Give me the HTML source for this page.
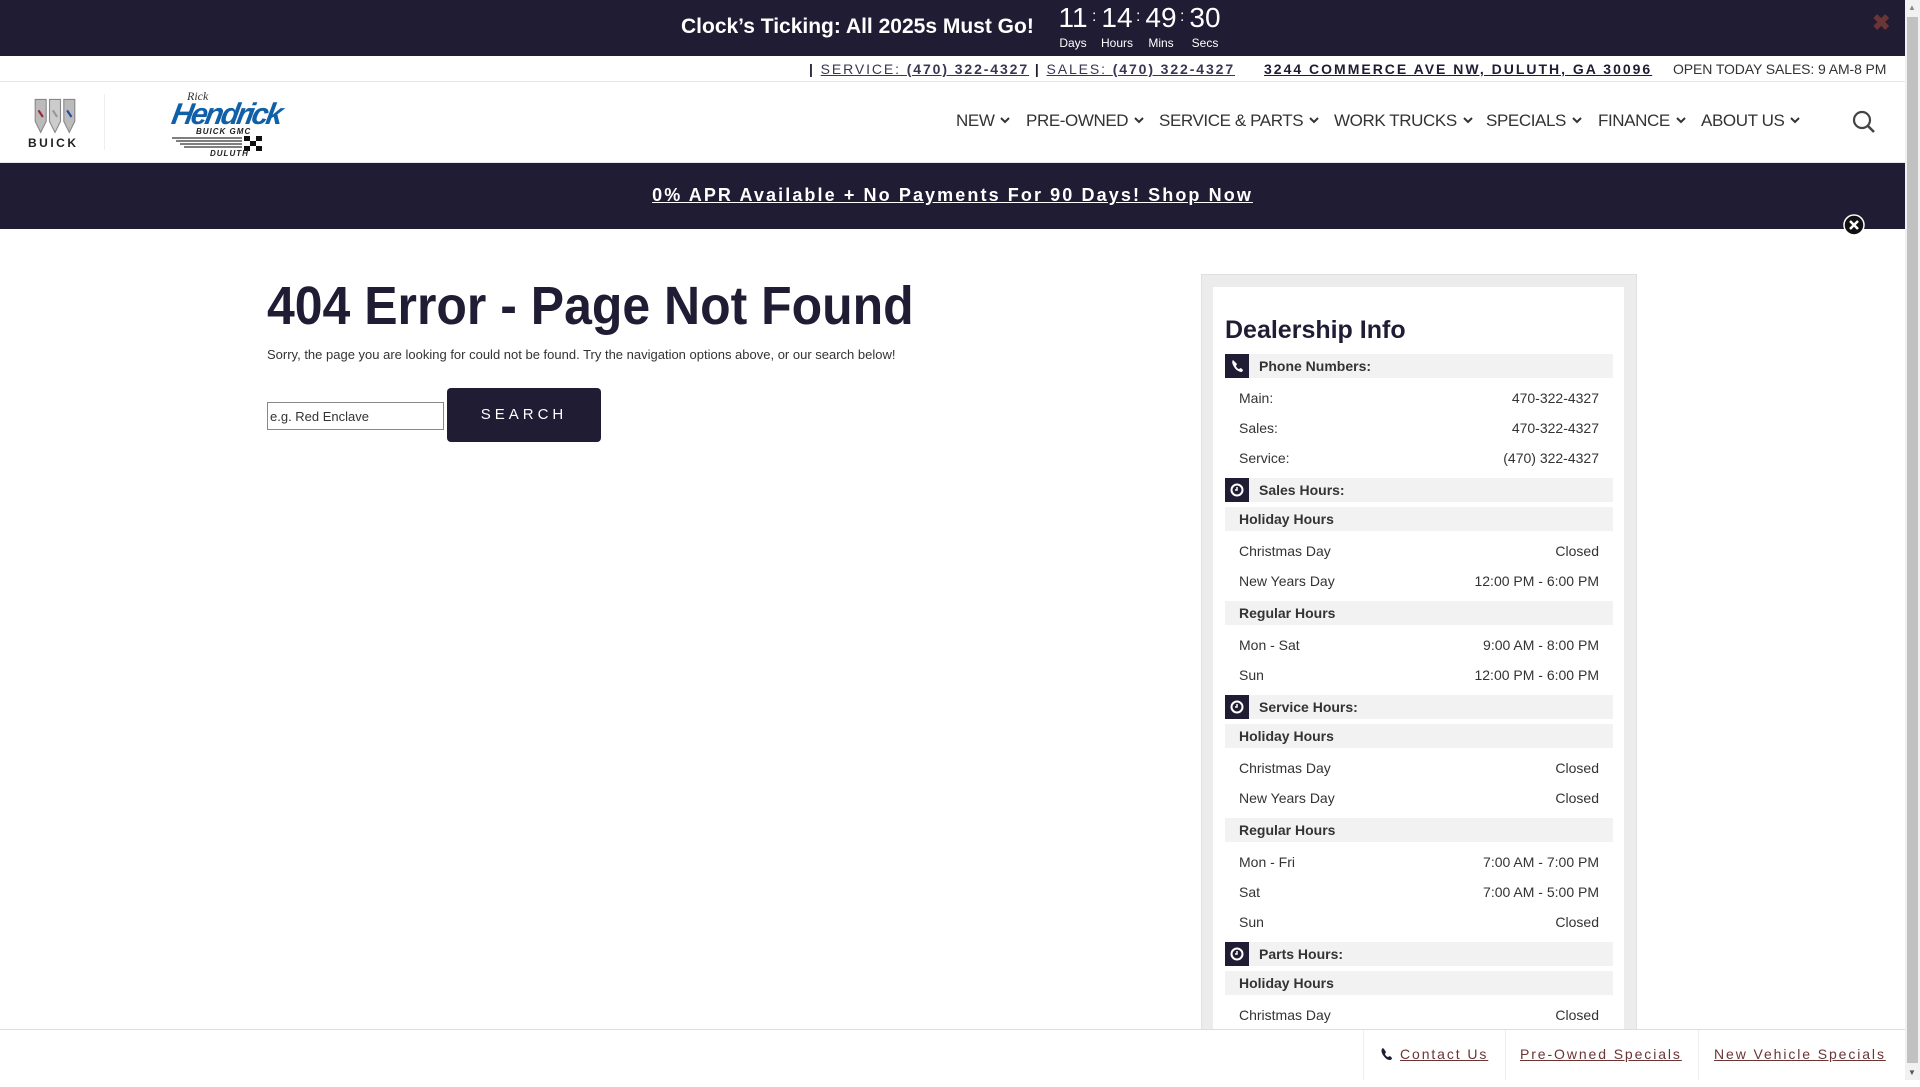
<!DOCTYPE html>
<html><head><meta charset="utf-8"><style>
*{margin:0;padding:0;box-sizing:border-box}
body{width:1920px;height:1080px;overflow:hidden;background:#fff;font-family:"Liberation Sans",Arial,sans-serif;color:#333;position:relative}
.a{position:absolute;white-space:nowrap}
.navy{background:#1f1c33}
.nav{font-size:17px;color:#333;letter-spacing:-0.4px;top:111px}
.nav svg{margin-left:6px;vertical-align:2px}
.row{position:absolute;left:1225px;width:388px;font-size:14px;color:#333}
.row .l{position:absolute;left:14px}
.row .r{position:absolute;right:14px}
.hd{position:absolute;left:1225px;width:388px;height:24px;background:#f2f2f2;font-size:14px;font-weight:bold;color:#333}
.hd .ic{position:absolute;left:0;top:0;width:24px;height:24px;background:#1f1c33}
.hd .t{position:absolute;left:34px;top:4px}
.sub{position:absolute;left:1225px;width:388px;height:24px;background:#f2f2f2;font-size:14px;font-weight:bold;color:#333}
.sub span{position:absolute;left:14px;top:4px}
.dg{position:absolute;top:2px;width:40px;text-align:center;font-size:28px;color:#fff}
.lb{position:absolute;top:36px;width:50px;text-align:center;font-size:12px;color:#fff}
.cl{position:absolute;top:8px;font-size:16px;color:#fff}
</style></head><body>
<!-- top bar -->
<div class="a navy" style="left:0;top:0;width:1905px;height:56px"></div>
<div class="a" style="left:681px;top:15px;font-size:21px;font-weight:bold;color:#fff">Clock’s Ticking: All 2025s Must Go!</div>
<div class="dg" style="left:1053px">11</div><div class="cl" style="left:1092px">:</div>
<div class="dg" style="left:1097px">14</div><div class="cl" style="left:1136px">:</div>
<div class="dg" style="left:1141px">49</div><div class="cl" style="left:1180px">:</div>
<div class="dg" style="left:1185px">30</div>
<div class="lb" style="left:1048px">Days</div>
<div class="lb" style="left:1092px">Hours</div>
<div class="lb" style="left:1136px">Mins</div>
<div class="lb" style="left:1180px">Secs</div>
<div class="a" style="left:1872px;top:10px;font-size:22px;font-weight:bold;color:#6b3535">✖</div>
<!-- info bar -->
<div class="a" style="left:809px;top:61px;font-size:14px;color:#1f1c33;letter-spacing:1.9px"><b>|</b> <span style="text-decoration:underline;color:#3a3550">SERVICE: <b>(470) 322-4327</b></span> <b>|</b> <span style="text-decoration:underline;color:#3a3550">SALES: <b>(470) 322-4327</b></span></div>
<div class="a" style="left:1264px;top:61px;font-size:14px;font-weight:bold;color:#1f1c33;letter-spacing:2px;text-decoration:underline">3244 COMMERCE AVE NW, DULUTH, GA 30096</div>
<div class="a" style="left:1673px;top:61px;font-size:14px;color:#333;letter-spacing:-0.1px">OPEN TODAY SALES: 9 AM-8 PM</div>
<div class="a" style="left:0;top:81px;width:1905px;height:1px;background:#e6e6e6"></div>
<!-- logos -->
<svg class="a" style="left:33px;top:97px" width="44" height="40" viewBox="0 0 40 36">
<path d="M2 2h10v20l-5 10-5-10z" fill="#bbb" stroke="#888"/>
<path d="M15 2h10v20l-5 10-5-10z" fill="#ccc" stroke="#888"/>
<path d="M28 2h10v20l-5 10-5-10z" fill="#bbb" stroke="#888"/>
<path d="M5 12l4 6" stroke="#9a2a3a" stroke-width="2"/><path d="M18 12l4 6" stroke="#999" stroke-width="2"/><path d="M31 12l4 6" stroke="#2a4aa0" stroke-width="2"/>
</svg>
<div class="a" style="left:28px;top:136px;font-size:12px;font-weight:bold;color:#222;letter-spacing:2.5px">BUICK</div>
<div class="a" style="left:104px;top:94px;width:1px;height:56px;background:#eee"></div>
<div class="a" style="left:187px;top:89px;font-size:12px;font-style:italic;color:#333;font-family:'Liberation Serif',serif">Rick</div>
<div class="a" style="left:172px;top:98px;font-size:30px;font-weight:bold;font-style:italic;color:#1060a8;letter-spacing:-2.5px;transform:skewX(-10deg)">Hendrick</div>
<div class="a" style="left:196px;top:127px;font-size:8px;font-weight:bold;font-style:italic;color:#222;letter-spacing:1px">BUICK GMC</div>
<svg class="a" style="left:172px;top:136px" width="100" height="16"><g stroke="#333" stroke-width="1.3"><line x1="0" y1="2" x2="70" y2="2"/><line x1="4" y1="5" x2="70" y2="5"/><line x1="8" y1="8" x2="70" y2="8"/><line x1="12" y1="11" x2="70" y2="11"/></g><rect x="72" y="0" width="6" height="5" fill="#111"/><rect x="84" y="0" width="6" height="5" fill="#111"/><rect x="78" y="5" width="6" height="5" fill="#111"/><rect x="72" y="10" width="6" height="5" fill="#111"/><rect x="84" y="10" width="6" height="5" fill="#111"/></svg>
<div class="a" style="left:210px;top:149px;font-size:8px;font-weight:bold;font-style:italic;color:#222;letter-spacing:1px">DULUTH</div>
<!-- nav -->
<div class="a nav" style="left:956px">NEW<svg width="10" height="7"><path d="M1 1l4 4 4-4" stroke="#333" stroke-width="2" fill="none"/></svg></div>
<div class="a nav" style="left:1026px">PRE-OWNED<svg width="10" height="7"><path d="M1 1l4 4 4-4" stroke="#333" stroke-width="2" fill="none"/></svg></div>
<div class="a nav" style="left:1159px">SERVICE &amp; PARTS<svg width="10" height="7"><path d="M1 1l4 4 4-4" stroke="#333" stroke-width="2" fill="none"/></svg></div>
<div class="a nav" style="left:1334px">WORK TRUCKS<svg width="10" height="7"><path d="M1 1l4 4 4-4" stroke="#333" stroke-width="2" fill="none"/></svg></div>
<div class="a nav" style="left:1486px">SPECIALS<svg width="10" height="7"><path d="M1 1l4 4 4-4" stroke="#333" stroke-width="2" fill="none"/></svg></div>
<div class="a nav" style="left:1598px">FINANCE<svg width="10" height="7"><path d="M1 1l4 4 4-4" stroke="#333" stroke-width="2" fill="none"/></svg></div>
<div class="a nav" style="left:1701px">ABOUT US<svg width="10" height="7"><path d="M1 1l4 4 4-4" stroke="#333" stroke-width="2" fill="none"/></svg></div>
<svg class="a" style="left:1852px;top:110px" width="24" height="25"><circle cx="10" cy="10" r="8" stroke="#444" stroke-width="2.2" fill="none"/><path d="M16 16l6 6" stroke="#444" stroke-width="2.5"/></svg>
<div class="a" style="left:0;top:162px;width:1905px;height:1px;background:#e6e6e6"></div>
<!-- promo -->
<div class="a navy" style="left:0;top:163px;width:1905px;height:66px"></div>
<div class="a" style="left:0;width:1905px;top:185px;text-align:center;font-size:18px;font-weight:bold;color:#fff;letter-spacing:2.1px;text-decoration:underline">0% APR Available + No Payments For 90 Days! Shop Now</div>
<svg class="a" style="left:1843px;top:214px" width="22" height="22"><circle cx="11" cy="11" r="10" fill="#111" stroke="#fff" stroke-width="1.5"/><path d="M7 7l8 8M15 7l-8 8" stroke="#fff" stroke-width="2.5"/></svg>
<!-- main -->
<div class="a" style="left:267px;top:275px;font-size:54px;font-weight:bold;color:#1f1c33;transform:scaleX(0.925);transform-origin:left">404 Error - Page Not Found</div>
<div class="a" style="left:267px;top:347px;font-size:13px;color:#333">Sorry, the page you are looking for could not be found. Try the navigation options above, or our search below!</div>
<div class="a" style="left:267px;top:402px;width:177px;height:28px;border:1px solid #888;font-size:13px;color:#333;padding:6px 2px">e.g. Red Enclave</div>
<div class="a navy" style="left:447px;top:388px;width:154px;height:54px;border-radius:4px;color:#fff;font-size:15px;letter-spacing:4px;text-align:center;line-height:54px">SEARCH</div>
<!-- sidebar -->
<div class="a" style="left:1201px;top:274px;width:436px;height:800px;background:#ececec;border:1px solid #e0e0e0"></div>
<div class="a" style="left:1213px;top:287px;width:411px;height:800px;background:#fff"></div>
<div class="a" style="left:1225px;top:316px;font-size:25px;font-weight:bold;color:#1f1c33">Dealership Info</div>

<div class="hd" style="top:354px"><div class="ic"><svg width="24" height="24"><path d="M8 6c-1 1-1 3 0 5 2 4 4 6 8 7 1 0 2-1 2-2l-2-2-2 1c-1 0-3-2-3-3l1-2-2-2z" fill="#fff"/></svg></div><span class="t">Phone Numbers:</span></div>
<div class="row" style="top:390px"><span class="l">Main:</span><span class="r">470-322-4327</span></div>
<div class="row" style="top:420px"><span class="l">Sales:</span><span class="r">470-322-4327</span></div>
<div class="row" style="top:450px"><span class="l">Service:</span><span class="r">(470) 322-4327</span></div>

<div class="hd" style="top:478px"><div class="ic"><svg width="24" height="24"><circle cx="12" cy="12" r="5.5" stroke="#fff" stroke-width="2" fill="none"/><path d="M12 9v3h-2" stroke="#fff" stroke-width="1.5" fill="none"/></svg></div><span class="t">Sales Hours:</span></div>
<div class="sub" style="top:507px"><span>Holiday Hours</span></div>
<div class="row" style="top:543px"><span class="l">Christmas Day</span><span class="r">Closed</span></div>
<div class="row" style="top:573px"><span class="l">New Years Day</span><span class="r">12:00 PM - 6:00 PM</span></div>
<div class="sub" style="top:601px"><span>Regular Hours</span></div>
<div class="row" style="top:637px"><span class="l">Mon - Sat</span><span class="r">9:00 AM - 8:00 PM</span></div>
<div class="row" style="top:667px"><span class="l">Sun</span><span class="r">12:00 PM - 6:00 PM</span></div>

<div class="hd" style="top:695px"><div class="ic"><svg width="24" height="24"><circle cx="12" cy="12" r="5.5" stroke="#fff" stroke-width="2" fill="none"/><path d="M12 9v3h-2" stroke="#fff" stroke-width="1.5" fill="none"/></svg></div><span class="t">Service Hours:</span></div>
<div class="sub" style="top:724px"><span>Holiday Hours</span></div>
<div class="row" style="top:760px"><span class="l">Christmas Day</span><span class="r">Closed</span></div>
<div class="row" style="top:790px"><span class="l">New Years Day</span><span class="r">Closed</span></div>
<div class="sub" style="top:818px"><span>Regular Hours</span></div>
<div class="row" style="top:854px"><span class="l">Mon - Fri</span><span class="r">7:00 AM - 7:00 PM</span></div>
<div class="row" style="top:884px"><span class="l">Sat</span><span class="r">7:00 AM - 5:00 PM</span></div>
<div class="row" style="top:914px"><span class="l">Sun</span><span class="r">Closed</span></div>

<div class="hd" style="top:942px"><div class="ic"><svg width="24" height="24"><circle cx="12" cy="12" r="5.5" stroke="#fff" stroke-width="2" fill="none"/><path d="M12 9v3h-2" stroke="#fff" stroke-width="1.5" fill="none"/></svg></div><span class="t">Parts Hours:</span></div>
<div class="sub" style="top:971px"><span>Holiday Hours</span></div>
<div class="row" style="top:1007px"><span class="l">Christmas Day</span><span class="r">Closed</span></div>

<!-- footer bar -->
<div class="a" style="left:0;top:1029px;width:1905px;height:51px;background:#fff;border-top:1px solid #ddd"></div>
<div class="a" style="left:1363px;top:1030px;width:1px;height:50px;background:#eee"></div>
<div class="a" style="left:1505px;top:1030px;width:1px;height:50px;background:#eee"></div>
<div class="a" style="left:1698px;top:1030px;width:1px;height:50px;background:#eee"></div>
<svg class="a" style="left:1380px;top:1047px" width="13" height="14"><path d="M3 1c-2 1-2 4 0 7 2 3 4 5 7 5 1 0 2-1 2-2l-2-2-2 1c-1 0-3-2-3-3l1-2-2-3z" fill="#1f1c33"/></svg>
<div class="a" style="left:1400px;top:1046px;font-size:14px;color:#6b3535;letter-spacing:1.9px;text-decoration:underline">Contact Us</div>
<div class="a" style="left:1520px;top:1046px;font-size:14px;color:#6b3535;letter-spacing:1.9px;text-decoration:underline">Pre-Owned Specials</div>
<div class="a" style="left:1714px;top:1046px;font-size:14px;color:#6b3535;letter-spacing:1.9px;text-decoration:underline">New Vehicle Specials</div>
<!-- scrollbar -->
<div class="a" style="left:1905px;top:0;width:15px;height:1080px;background:#f1f1f1"></div>
<div class="a" style="left:1907px;top:17px;width:11px;height:1046px;background:#c1c1c1"></div>
<div class="a" style="left:1908px;top:3px;font-size:8px;color:#888">▲</div>
<div class="a" style="left:1908px;top:1068px;font-size:8px;color:#555">▼</div>
</body></html>
